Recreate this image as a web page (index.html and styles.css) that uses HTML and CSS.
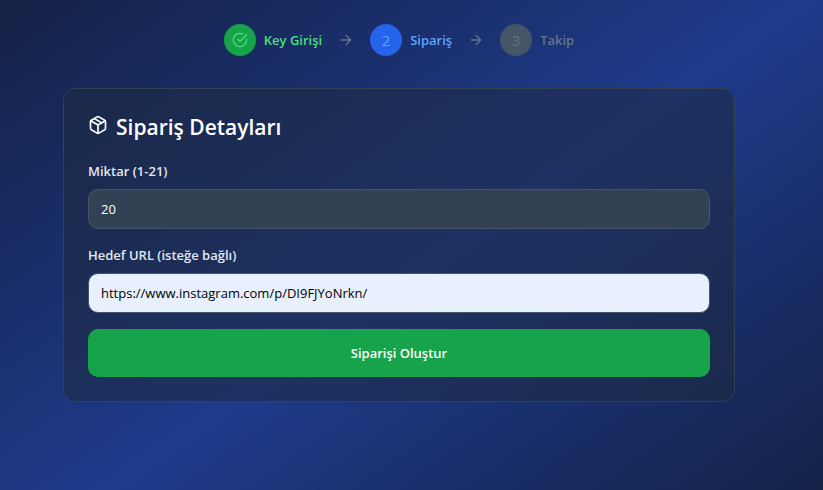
FILE: index.html
```html
<!DOCTYPE html>
<html lang="tr">
<head>
<meta charset="utf-8">
<meta name="viewport" content="width=device-width, initial-scale=1">
<title>Sipariş Detayları</title>
<link rel="stylesheet" href="styles.css">
</head>
<body>
<main class="page">
  <ol class="steps">
    <li class="step step-done">
      <span class="step-mark"><svg class="icon-sm" viewBox="0 0 24 24" aria-hidden="true"><path d="M22 11.08V12a10 10 0 1 1-5.93-9.14"/><path d="m9 11 3 3L22 4"/></svg></span>
      <span class="step-name">Key Girişi</span>
    </li>
    <li class="arrow" aria-hidden="true"><svg class="icon-sm" viewBox="0 0 24 24"><path d="M5 12h14"/><path d="m12 5 7 7-7 7"/></svg></li>
    <li class="step step-current" aria-current="step">
      <span class="step-mark">2</span>
      <span class="step-name">Sipariş</span>
    </li>
    <li class="arrow" aria-hidden="true"><svg class="icon-sm" viewBox="0 0 24 24"><path d="M5 12h14"/><path d="m12 5 7 7-7 7"/></svg></li>
    <li class="step step-next">
      <span class="step-mark">3</span>
      <span class="step-name">Takip</span>
    </li>
  </ol>

  <section class="card">
    <h1 class="card-title">
      <svg class="icon-md" viewBox="0 0 24 24" aria-hidden="true"><path d="m7.5 4.27 9 5.15"/><path d="M21 8a2 2 0 0 0-1-1.73l-7-4a2 2 0 0 0-2 0l-7 4A2 2 0 0 0 3 8v8a2 2 0 0 0 1 1.73l7 4a2 2 0 0 0 2 0l7-4A2 2 0 0 0 21 16Z"/><path d="m3.3 7 8.7 5 8.7-5"/><path d="M12 22V12"/></svg>
      <span>Sipariş Detayları</span>
    </h1>
    <form class="form">
      <div class="field">
        <label for="amount">Miktar (1-21)</label>
        <input class="input" id="amount" type="text" inputmode="numeric" value="20">
      </div>
      <div class="field">
        <label for="url">Hedef URL (isteğe bağlı)</label>
        <input class="input input-filled" id="url" type="url" value="https://www.instagram.com/p/DI9FJYoNrkn/">
      </div>
      <button class="submit" type="button">Siparişi Oluştur</button>
    </form>
  </section>
</main>
</body>
</html>
```
FILE: styles.css
```css
* {
  box-sizing: border-box;
}

body {
  margin: 0;
  padding-right: 25px;
  min-height: 100vh;
  font-family: "Open Sans", "Noto Sans", sans-serif;
  font-size: 13px;
  line-height: 20px;
  color: #fff;
  background: linear-gradient(145deg, #142145, #1e3a8a 53%, #142247) no-repeat;
}

.page {
  max-width: 720px;
  margin: 0 auto;
  padding: 24px;
}

svg {
  display: block;
  fill: none;
  stroke: currentColor;
  stroke-width: 2;
  stroke-linecap: round;
  stroke-linejoin: round;
}

.icon-sm {
  width: 16px;
  height: 16px;
}

.icon-md {
  width: 20px;
  height: 20px;
}

.steps {
  display: flex;
  justify-content: center;
  align-items: center;
  gap: 16px;
  margin: 0 0 32px;
  padding: 0;
  list-style: none;
}

.step {
  display: flex;
  align-items: center;
  gap: 8px;
}

.step-mark {
  display: flex;
  align-items: center;
  justify-content: center;
  width: 32px;
  height: 32px;
  border-radius: 50%;
  font-size: 15px;
}

.step-name {
  font-weight: 600;
}

.step-done {
  color: #4ade80;
}

.step-done .step-mark {
  background: #16a34a;
}

.step-current {
  color: #60a5fa;
}

.step-current .step-mark {
  background: #2563eb;
}

.step-next {
  color: #64748b;
}

.step-next .step-mark {
  background: #475569;
}

.arrow {
  color: #64748b;
}

.card {
  padding: 24px;
  border: 1px solid #334155;
  border-radius: 12px;
  background: rgba(30, 41, 59, 0.5);
}

.card-title {
  display: flex;
  align-items: flex-start;
  gap: 8px;
  margin: 0 0 22px;
  padding-top: 2px;
  font-size: 21px;
  font-weight: 600;
  line-height: 24px;
}

.form {
  display: flex;
  flex-direction: column;
  gap: 16px;
}

.field {
  display: flex;
  flex-direction: column;
  gap: 8px;
}

.field label {
  font-weight: 600;
  color: #e2e8f0;
}

.input {
  width: 100%;
  height: 40px;
  padding: 8px 12px;
  border: 1px solid #475569;
  border-radius: 10px;
  font: inherit;
  color: #fff;
  background: #334155;
}

.input-filled {
  color: #000;
  background: #e8f0fe;
}

.submit {
  height: 48px;
  border: 0;
  border-radius: 10px;
  font: inherit;
  font-weight: 600;
  color: #fff;
  background: #16a34a;
}
```
